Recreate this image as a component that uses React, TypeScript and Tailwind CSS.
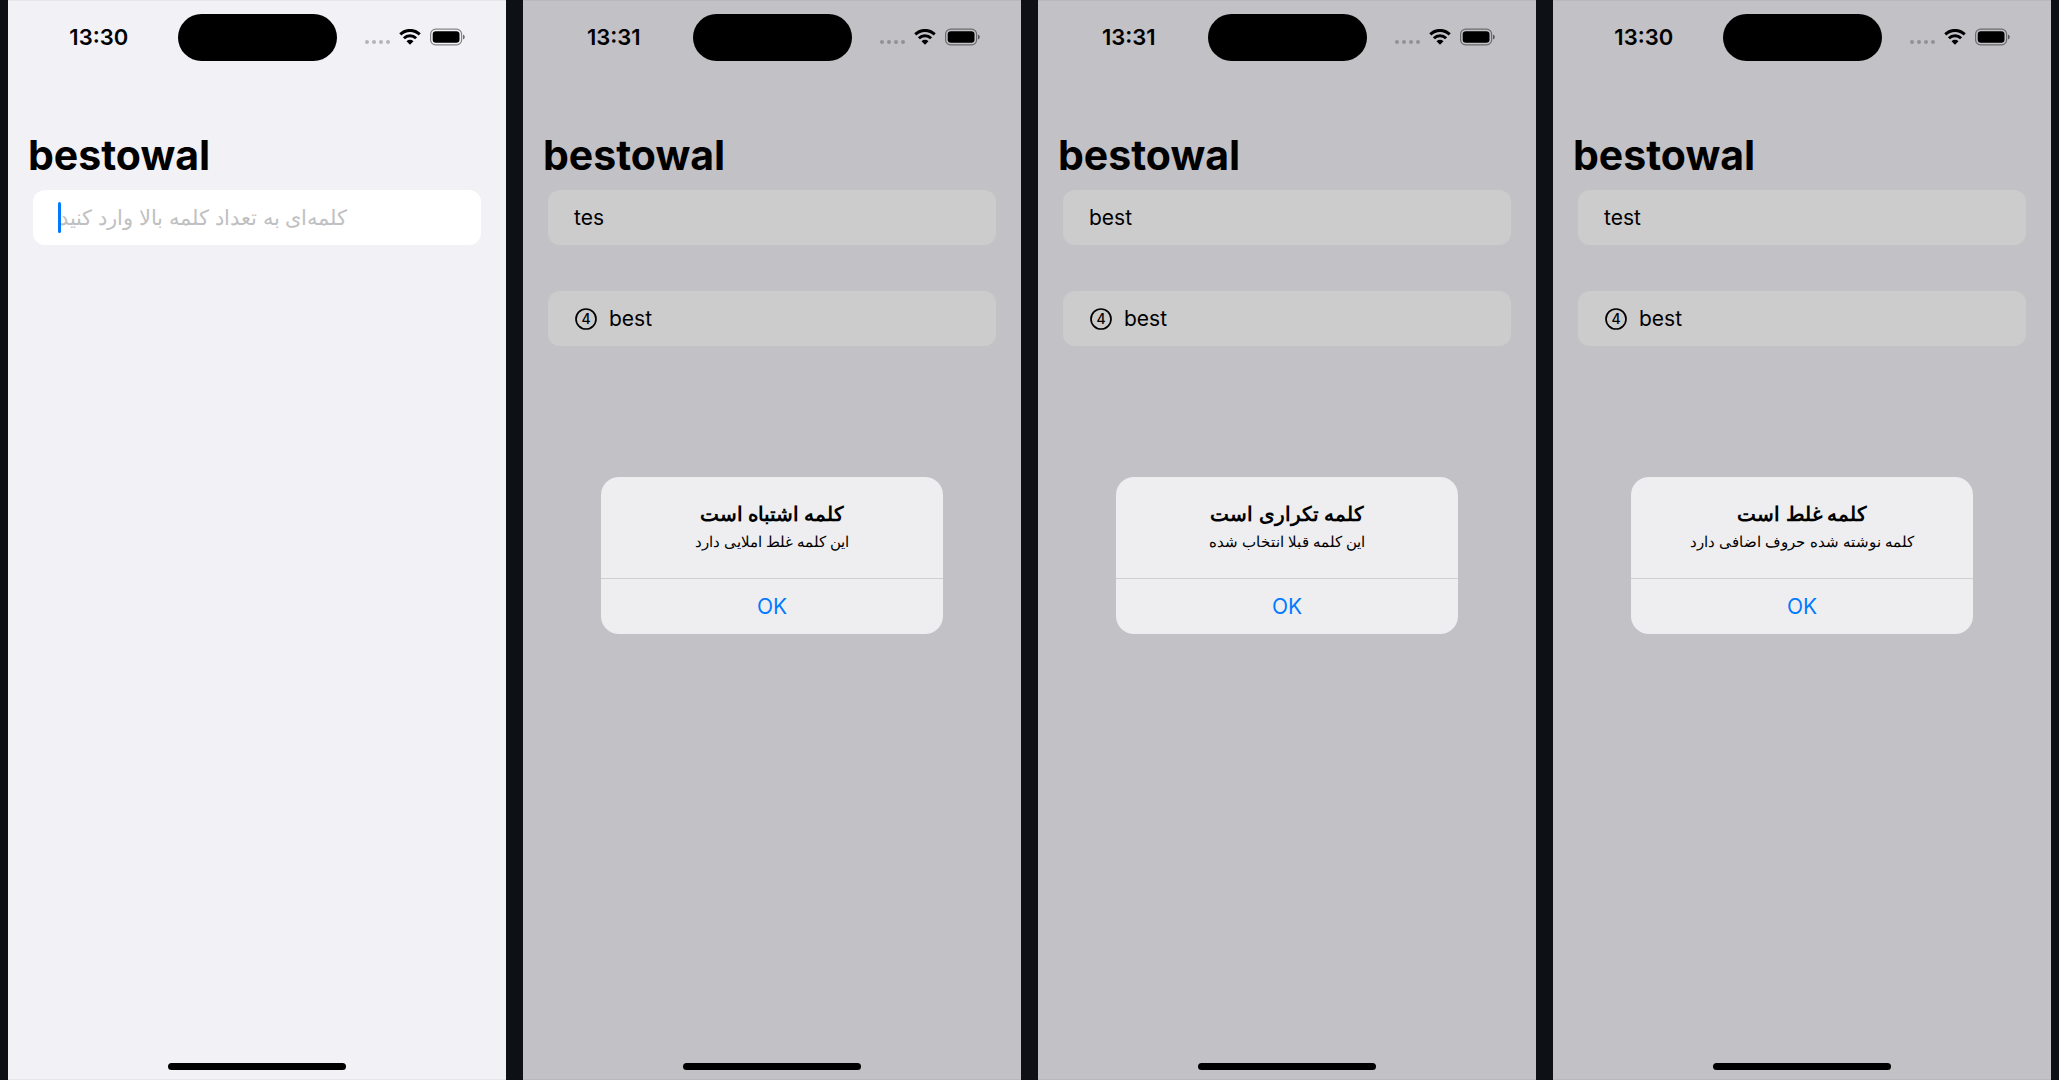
type Alert = { title: string; message: string };

type Screen = {
  id: string;
  time: string;
  value: string;
  words: string[];
  alert?: Alert;
};

const screens: Screen[] = [
  { id: "empty", time: "13:30", value: "", words: [] },
  {
    id: "misspelled",
    time: "13:31",
    value: "tes",
    words: ["best"],
    alert: { title: "کلمه اشتباه است", message: "این کلمه غلط املایی دارد" },
  },
  {
    id: "repeated",
    time: "13:31",
    value: "best",
    words: ["best"],
    alert: { title: "کلمه تکراری است", message: "این کلمه قبلا انتخاب شده" },
  },
  {
    id: "wrong",
    time: "13:30",
    value: "test",
    words: ["best"],
    alert: { title: "کلمه غلط است", message: "کلمه نوشته شده حروف اضافی دارد" },
  },
];

function WifiIcon() {
  return (
    <svg width="22" height="16" viewBox="0 0 22 16" aria-hidden="true">
      <g fill="none" stroke="black" strokeWidth="3">
        <path d="M1.3 5.4 A13.8 13.8 0 0 1 20.7 5.4" />
        <path d="M4.9 9.2 A8.7 8.7 0 0 1 17.1 9.2" />
      </g>
      <path d="M7.5 12.3 A5 5 0 0 1 14.5 12.3 L11 15.8 Z" />
    </svg>
  );
}

function BatteryIcon() {
  return (
    <svg width="35" height="18" viewBox="0 0 35 18" aria-hidden="true">
      <rect x="0.6" y="1.1" width="31" height="15.8" rx="5" fill="none" stroke="black" strokeOpacity="0.45" strokeWidth="1.2" />
      <rect x="2.7" y="3.2" width="26.8" height="11.6" rx="3.2" />
      <path d="M33 6.5 Q34.8 7.4 34.8 9 Q34.8 10.6 33 11.5 Z" fillOpacity="0.55" />
    </svg>
  );
}

function CountIcon({ count }: { count: number }) {
  return (
    <svg width="22" height="22" viewBox="0 0 22 22" role="img" aria-label={`${count} letters`}>
      <circle cx="11" cy="11" r="10" fill="none" stroke="black" strokeWidth="1.7" />
      <text x="11" y="16" textAnchor="middle" className="text-[14px] font-medium">
        {count}
      </text>
    </svg>
  );
}

function StatusBar({ time }: { time: string }) {
  return (
    <div className="grid grid-cols-[1fr_159px_1fr] items-center pt-[13px]">
      <div className="pb-px pl-3 text-center text-[22px] leading-7 font-semibold">{time}</div>
      <div className="h-[47px] rounded-full bg-black" />
      <div className="flex items-center justify-end pr-[41px] pb-px">
        <div className="mt-[10px] mr-[9px] flex gap-[3px]">
          <span className="size-1 rounded-full bg-black/25" />
          <span className="size-1 rounded-full bg-black/25" />
          <span className="size-1 rounded-full bg-black/25" />
          <span className="size-1 rounded-full bg-black/25" />
        </div>
        <WifiIcon />
        <div className="ml-[9px]">
          <BatteryIcon />
        </div>
      </div>
    </div>
  );
}

function AlertBox({ id, alert }: { id: string; alert: Alert }) {
  return (
    <div
      role="alertdialog"
      aria-labelledby={`${id}-title`}
      aria-describedby={`${id}-message`}
      className="mx-auto mt-[131px] w-[342px] overflow-hidden rounded-[18px] bg-[#eeeef0]"
    >
      <div dir="rtl" className="flex h-[101px] flex-col items-center pt-[23px]">
        <h2 id={`${id}-title`} className="text-[20px] leading-7 font-semibold">
          {alert.title}
        </h2>
        <p id={`${id}-message`} className="text-[15px] leading-7">
          {alert.message}
        </p>
      </div>
      <button type="button" className="h-14 w-full border-t border-[#cfcfd2] text-[21px] text-[#007aff]">
        OK
      </button>
    </div>
  );
}

function Phone({ screen }: { screen: Screen }) {
  const dimmed = Boolean(screen.alert);
  const field = dimmed ? "bg-[#cccccc]" : "bg-white";
  return (
    <section
      className={`flex min-h-screen min-w-0 flex-1 flex-col border-y ${
        dimmed ? "border-[#b8b8bc] bg-[#c2c1c6]" : "border-[#e6e6ea] bg-[#f2f1f6]"
      }`}
    >
      <StatusBar time={screen.time} />
      <h1 className="mt-[69px] px-5 text-[41px] leading-[50px] font-bold">bestowal</h1>
      <div className="relative mx-[25px] mt-[10px]">
        <input
          type="text"
          aria-label="کلمه"
          defaultValue={screen.value}
          placeholder="کلمه‌ای به تعداد کلمه بالا وارد کنید"
          className={`h-[55px] w-full rounded-xl px-[26px] text-[21px] outline-none placeholder:text-[#c0c0c2] ${field}`}
        />
        {!dimmed && <span className="absolute top-3 left-[25px] h-[31px] w-[3px] rounded-full bg-[#007aff]" />}
      </div>
      {screen.words.length > 0 && (
        <ul className={`mx-[25px] mt-[46px] rounded-xl ${field}`}>
          {screen.words.map((word) => (
            <li key={word} className="flex h-[55px] items-center gap-3 px-[27px] text-[21px]">
              <CountIcon count={word.length} />
              {word}
            </li>
          ))}
        </ul>
      )}
      {screen.alert && <AlertBox id={screen.id} alert={screen.alert} />}
      <div className="mx-auto mt-auto mb-[9px] h-[7px] w-[178px] rounded-full bg-black" />
    </section>
  );
}

export default function App() {
  return (
    <main className="flex min-h-screen gap-[17px] bg-[#0d1116] px-2 font-['Inter','Noto_Sans',sans-serif] text-black">
      {screens.map((screen) => (
        <Phone key={screen.id} screen={screen} />
      ))}
    </main>
  );
}
